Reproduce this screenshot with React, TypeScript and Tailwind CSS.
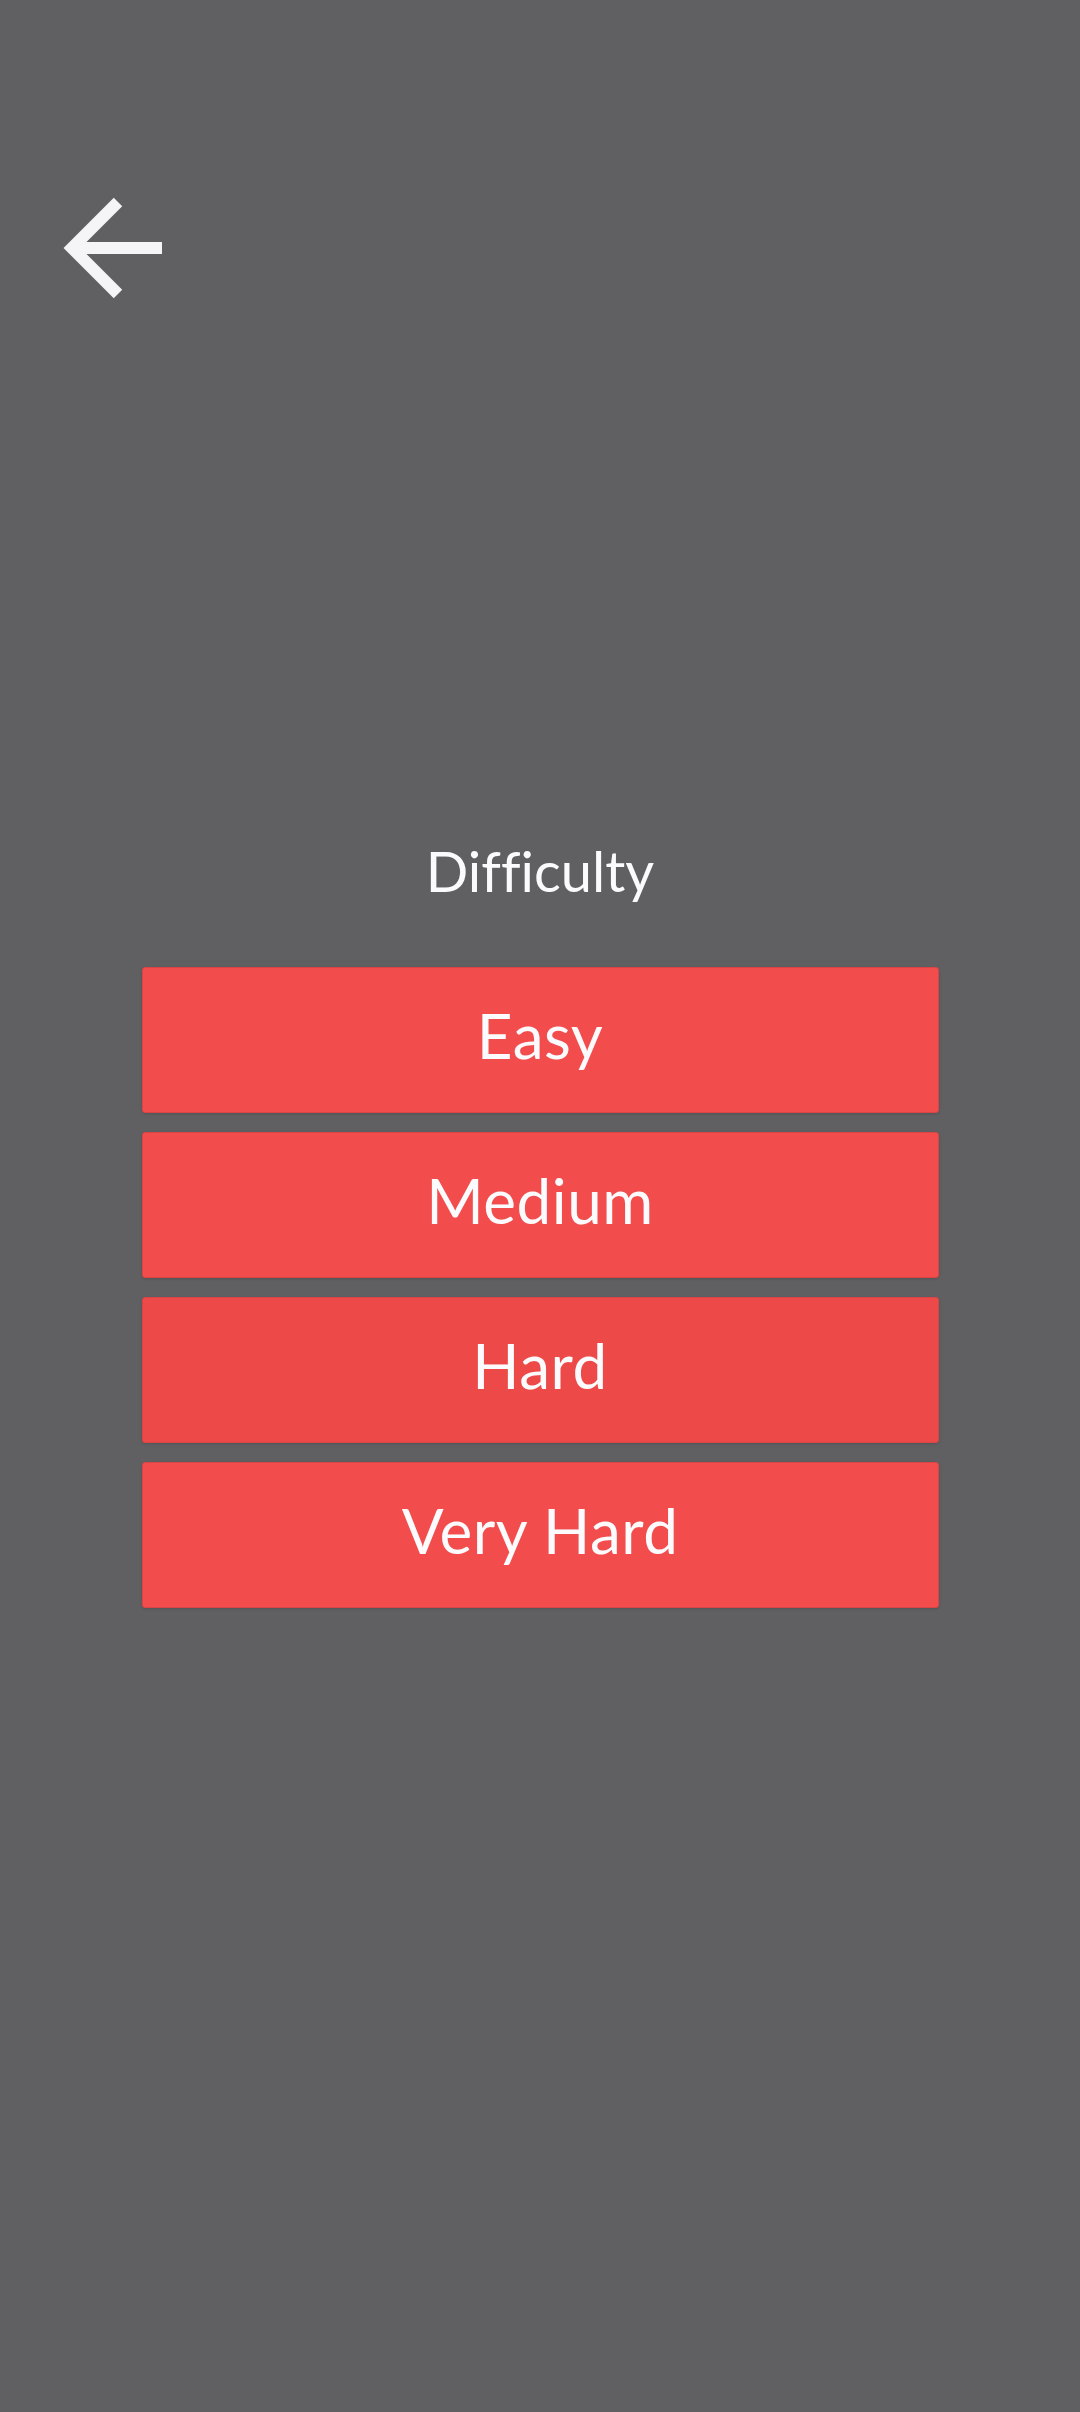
const levels = [
  { label: 'Easy', bg: 'bg-[#f24c4c]' },
  { label: 'Medium', bg: 'bg-[#f24c4c]' },
  { label: 'Hard', bg: 'bg-[#ed4949]' },
  { label: 'Very Hard', bg: 'bg-[#f24c4c]' },
];

function BackArrow() {
  return (
    <svg width="120" height="120" viewBox="0 0 120 120" fill="none">
      <polyline
        points="68,12 22,58 68,104"
        stroke="#f5f4f7"
        strokeWidth="12"
        strokeLinejoin="miter"
        strokeLinecap="butt"
      />
      <line x1="22" y1="58" x2="112" y2="58" stroke="#f5f4f7" strokeWidth="12" />
    </svg>
  );
}

export default function App() {
  return (
    <div
      className="min-h-[2412px] w-full bg-[#605f62] flex flex-col text-[#fbfafc] [font-variant-ligatures:none]"
      style={{ fontFamily: 'Lato, "Open Sans", sans-serif' }}
    >
      <div className="pt-[190px] pl-[50px]">
        <button type="button" aria-label="Back">
          <BackArrow />
        </button>
      </div>

      <div className="mt-[527px] flex flex-col items-center">
        <h1 className="text-[56px] leading-none font-normal">Difficulty</h1>

        <div className="mt-[68px] w-[797px] flex flex-col gap-[19px]">
          {levels.map((level) => (
            <button
              key={level.label}
              type="button"
              className={`${level.bg} h-[146px] w-full rounded-[3px] border border-[#d94545] shadow-sm flex items-center justify-center pb-[10px] text-[62px] leading-none tracking-[0.5px]`}
            >
              {level.label}
            </button>
          ))}
        </div>
      </div>
    </div>
  );
}
